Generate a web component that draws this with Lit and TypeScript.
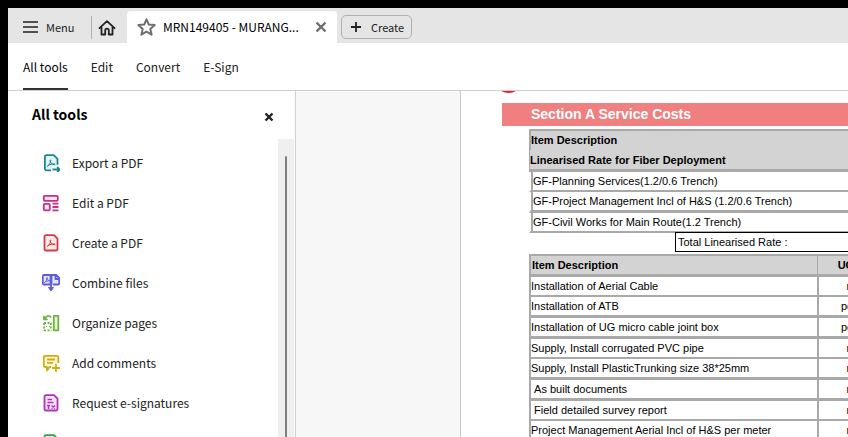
import { LitElement, html, css, svg } from "lit";
import { customElement, property } from "lit/decorators.js";

const acrobat = svg`<path d="M5.500 12.200c1.600-1 3-3.200 3.200-5.600 0-.9-.7-.9-.7 0 .2 2 2.200 4 4.500 4.200 .9 0 .8-.9-.2-.9-2 0-4.600 .7-6.300 1.700-.8.5-.9.9-.5.6z" stroke-width="1"/>`;

const icons: Record<string, unknown> = {
  export: svg`<g stroke="#1c8790"><path fill="#e3f3f4" stroke="none" d="M3 2h9l4 4v6H10v4H3z"/><path d="M9 16.300H4.500a1.600 1.600 0 0 1-1.600-1.600V2.700a1.600 1.600 0 0 1 1.600-1.600h7.300l3.700 3.700v6"/>${acrobat}<path d="M10.500 15.500h7M15.200 13l2.500 2.500-2.500 2.500"/></g>`,
  edit: svg`<g stroke="#cc2d87"><rect x="1.800" y="1.800" width="14" height="5" rx="1" fill="#fbe4f1"/><rect x="1.800" y="9.800" width="6" height="6.500" rx="1" fill="#fbe4f1"/><path d="M10.500 9.700h6M10.500 13h6M10.500 16.300h6"/></g>`,
  create: svg`<g stroke="#d7373f"><path fill="#fdeaea" d="M4 1.200h8l3.500 3.500v10.300a1.500 1.500 0 0 1-1.500 1.500H4A1.500 1.500 0 0 1 2.500 15V2.700A1.500 1.500 0 0 1 4 1.200z"/>${acrobat}</g>`,
  combine: svg`<g stroke="#5c5ce0"><path fill="#e6e6fb" d="M7 10.500H1.800a1 1 0 0 1-1-1v-7.500a1 1 0 0 1 1-1H8.500v9.500zM11 10.500h5.200a1 1 0 0 0 1-1V4l-3-3H9.500v9.500M13.500 1.500V5H17"/><path stroke-width="1" d="M2.500 8.500C4 7.500 5 5.500 5 3.500c.3 2 1.200 3 2.500 3.300-2 0-4 .7-5 1.700"/><path d="M9 7v9"/><path fill="#5c5ce0" stroke-width="1" d="M6.500 13.500h5L9 17z"/></g>`,
  organize: svg`<g stroke="#72b340"><rect x="11.800" y="1.800" width="4.500" height="14.500" fill="#e9f6df"/><path stroke-dasharray="2 1.500" d="M2 9h7.500M2 16.300h7.500M2 9v7.500M8.800 9v7.500"/><path stroke-dasharray="1 2" stroke-width="1" d="M4 12.500h4"/><path d="M9 3.500C7.500 1.300 5 1.300 3.300 4"/><path fill="#72b340" stroke-width="1" d="M1.500 1.800v4h4z"/></g>`,
  comment: svg`<g stroke="#cfae12"><path fill="#fdf7d7" d="M9 13H7.500L5 16.500V13H3.300a1.500 1.500 0 0 1-1.500-1.500V3.300a1.500 1.500 0 0 1 1.500-1.500h11.500a1.500 1.500 0 0 1 1.500 1.500V9"/><path d="M5 5.500h8M5 8.800h6M14 10v8M10 14h8"/></g>`,
  sign: svg`<g stroke="#b130bd"><path fill="#f9e4fa" d="M4 1.200h8l3.500 3.500v10.300a1.500 1.500 0 0 1-1.500 1.500H4A1.500 1.500 0 0 1 2.500 15V2.700A1.500 1.500 0 0 1 4 1.200z"/><path stroke-width="1.500" d="M5.500 5.500h4.500M5.500 8.500h6M6.500 11v4M5 11.500h3M9.500 11.500l3.500 3M13 11.500l-3.500 3"/></g>`,
  scan: svg`<g stroke="#2da350"><path fill="#def3e4" d="M4 1.200h8l3.500 3.500v10.300a1.500 1.500 0 0 1-1.500 1.500H4A1.500 1.500 0 0 1 2.500 15V2.700A1.500 1.500 0 0 1 4 1.200z"/></g>`,
};

@customElement("tool-item")
export class ToolItem extends LitElement {
  @property() icon = "";
  @property() label = "";

  static styles = css`
    :host { display: block; }
    .tool {
      display: flex; align-items: center; gap: 12px; width: 100%; height: 40px;
      padding: 0; border: 0; background: none; color: #222; text-align: left;
      font: 12px/20px "Noto Sans CJK SC", sans-serif;
    }
    .glyph { width: 18px; height: 18px; fill: none; stroke-width: 1.8; stroke-linejoin: round; }
  `;

  render() {
    return html`<button class="tool">
      <svg class="glyph" viewBox="0 0 18 18" aria-hidden="true">${icons[this.icon]}</svg>
      <span>${this.label}</span>
    </button>`;
  }
}

const tools = [
  ["export", "Export a PDF"], ["edit", "Edit a PDF"], ["create", "Create a PDF"],
  ["combine", "Combine files"], ["organize", "Organize pages"], ["comment", "Add comments"],
  ["sign", "Request e-signatures"], ["scan", "Scan & OCR"],
];

const planning = [
  "GF-Planning Services(1.2/0.6 Trench)",
  "GF-Project Management Incl of H&S (1.2/0.6 Trench)",
  "GF-Civil Works for Main Route(1.2 Trench)",
];

const works = [
  ["Installation of Aerial Cable", "m"],
  ["Installation of ATB", "pcs."],
  ["Installation of UG micro cable joint box", "pcs."],
  ["Supply, Install corrugated PVC pipe", "m"],
  ["Supply, Install PlasticTrunking size 38*25mm", "m"],
  ["\u00a0As built documents", "m"],
  ["\u00a0Field detailed survey report", "m"],
  ["Project Management Aerial Incl of H&S per meter", "m"],
];

@customElement("app-root")
export class AppRoot extends LitElement {
  static styles = css`
    :host {
      display: flex; flex-direction: column; box-sizing: border-box; height: 100vh;
      padding: 8px 0 0 8px; background: #000; color: #222; overflow: hidden;
      font: 12px/20px "Noto Sans CJK SC", sans-serif;
    }
    button { padding: 0; border: 0; background: none; color: inherit; font: inherit; }
    .line { fill: none; stroke: currentColor; display: block; }

    .titlebar { display: flex; flex: none; height: 35px; background: #e5e5e5; }
    .menu { display: flex; align-items: center; gap: 8px; width: 83px; padding: 2px 0 0 15px; font-size: 11px; box-sizing: border-box; }
    .bars { color: #505050; }
    .home { display: flex; align-items: center; justify-content: center; width: 31px; height: 23px; margin: 8px 5px 0 0; border-left: 1px solid #b1b1b1; }
    .tab { display: flex; align-items: center; width: 210px; height: 32px; margin-top: 3px; padding: 0 10px; box-sizing: border-box; border-radius: 4px 4px 0 0; background: #fff; color: #000; }
    .title { flex: 1; margin-left: 7px; white-space: nowrap; }
    .star, .close { color: #6e6e6e; }
    .create { display: flex; align-items: center; gap: 9px; height: 24px; width: 71px; margin: 7px 0 0 4px; padding-left: 8px; box-sizing: border-box; border: 1px solid #b1b1b1; border-radius: 5px; font-size: 11px; }

    .nav { display: flex; flex: none; gap: 23px; height: 47px; padding-left: 15px; background: #fff; border-bottom: 1px solid #d0d0d0; }
    .link { box-sizing: border-box; padding-top: 14px; color: #222; text-decoration: none; }
    .link.current { color: #000; border-bottom: 2px solid #333; }

    .body { display: flex; flex: 1; min-height: 0; background: #f7f7f7; }
    .panel { display: flex; flex: none; flex-direction: column; width: 287px; background: #fff; border-right: 1px solid #d0d0d0; }
    .head { display: flex; flex: none; justify-content: space-between; height: 48px; padding: 0 21px 0 24px; box-sizing: border-box; }
    .heading { margin: 13px 0 0; font: bold 14px/20px "Noto Sans CJK SC", sans-serif; color: #000; }
    .head button { margin-top: 4px; color: #222; }
    .scroller { display: flex; flex: 1; min-height: 0; margin-right: 1px; }
    .list { flex: 1; margin: 0; padding: 4px 0 0 34px; list-style: none; }
    .track { width: 16px; padding: 17px 6px 0 7px; box-sizing: border-box; background: #efefef; }
    .thumb { height: 100%; width: 2px; background: #808080; border-radius: 1px 1px 0 0; }

    .sheet {
      flex: 1; min-width: 0; margin-left: 164px; overflow: hidden; background: #fff;
      border-left: 1px solid #c8c8c8; color: #000; font: 11px/18px "Liberation Sans", Arial, sans-serif;
    }
    .mark { display: block; margin-left: 39px; }
    .banner { margin: 0 0 3px 41px; padding-left: 29px; background: #f08080; color: #fff; font: bold 14px/23px "Liberation Sans", Arial, sans-serif; }
    table { margin-left: 68px; border-collapse: separate; border-spacing: 0; table-layout: fixed; white-space: nowrap; }
    th, td { padding: 0; text-align: left; }
    th { background: #d3d3d3; }
    .rates { width: calc(100% - 68px); }
    .rates .top { padding-bottom: 1px; border-top: 2px solid #a9a9a9; border-left: 2px solid #a9a9a9; }
    .rates .sub { height: 19px; padding: 0; border-left: 1px solid #a9a9a9; border-bottom: 3px solid #a9a9a9; }
    .rates td { padding-left: 2px; border-left: 2px solid #fff; border-bottom: 3px solid #a9a9a9; box-shadow: inset 2px 0 #a9a9a9; }
    .rates tbody tr:first-child td, .rates tr:last-child td { border-bottom-width: 2px; }
    .total { position: relative; margin: -1px 0 2px 214px; padding-left: 2px; background: #fff; border: 1px solid #000; border-right: 0; }
    .works { width: 354px; }
    .works .name { width: 288px; }
    .works th { border-top: 2px solid #a9a9a9; border-bottom: 3px solid #a9a9a9; }
    .works th.name { padding-left: 1px; border-left: 2px solid #a9a9a9; box-sizing: border-box; }
    .works .unit { padding: 0; text-align: center; border-left: 1px solid #a9a9a9; }
    .works td { border-left: 2px solid #a9a9a9; border-bottom: 3px solid #a9a9a9; }
    .works td.unit { border-left-width: 2px; }
    .works tr:nth-child(3n + 1) td { border-bottom-width: 2px; }
  `;

  render() {
    return html`
      <header class="titlebar">
        <button class="menu">
          <svg class="line bars" width="15" height="14" stroke-width="2"><path d="M0 2h15M0 7h15M0 12h15" /></svg>Menu
        </button>
        <button class="home" aria-label="Home">
          <svg class="line" width="18" height="16" stroke-width="1.800" stroke-linejoin="round" stroke-linecap="round"><path d="M1.500 8.200 9 1.200l7.500 7M3.500 7v7.500h3.700v-4a1.800 1.800 0 0 1 3.600 0v4h3.700V7" /></svg>
        </button>
        <div class="tab">
          <svg class="line star" width="19" height="18" stroke-width="2" stroke-linejoin="round"><path d="m9.500 1.300 2.300 5.300 5.900.5-4.400 3.900 1.300 5.700-5.100-3-5.100 3 1.300-5.700L1.300 7.100l5.900-.5z" /></svg>
          <span class="title">MRN149405 - MURANG...</span>
          <button class="close" aria-label="Close tab"><svg class="line" width="12" height="12" stroke-width="2.400"><path d="m1.500 1.500 9 9m0-9-9 9" /></svg></button>
        </div>
        <button class="create"><svg class="line" width="12" height="12" stroke-width="1.800"><path d="M6 1v10M1 6h10" /></svg>Create</button>
      </header>
      <nav class="nav">
        <a class="link current" href="#tools">All tools</a>
        <a class="link" href="#edit">Edit</a>
        <a class="link" href="#convert">Convert</a>
        <a class="link" href="#sign">E-Sign</a>
      </nav>
      <div class="body">
        <aside class="panel">
          <div class="head">
            <h2 class="heading">All tools</h2>
            <button aria-label="Close panel"><svg class="line" width="10" height="10" stroke-width="2.400"><path d="m1.500 1.500 7 7m0-7-7 7" /></svg></button>
          </div>
          <div class="scroller">
            <ul class="list">
              ${tools.map(([icon, label]) => html`<li><tool-item icon=${icon} label=${label}></tool-item></li>`)}
            </ul>
            <div class="track"><div class="thumb"></div></div>
          </div>
        </aside>
        <main class="sheet">
          <svg class="mark" width="18" height="12" aria-hidden="true"><path fill="#e0202c" d="M1 0h15Q9 4 1 0z" /></svg>
          <h3 class="banner">Section A Service Costs</h3>
          <table class="rates">
            <thead>
              <tr><th class="top">Item Description</th></tr>
              <tr><th class="sub">Linearised Rate for Fiber Deployment</th></tr>
            </thead>
            <tbody>${planning.map((name) => html`<tr><td>${name}</td></tr>`)}</tbody>
          </table>
          <div class="total">Total Linearised Rate :</div>
          <table class="works">
            <thead><tr><th class="name">Item Description</th><th class="unit">UOM</th></tr></thead>
            <tbody>${works.map(([name, unit]) => html`<tr><td>${name}</td><td class="unit">${unit}</td></tr>`)}</tbody>
          </table>
        </main>
      </div>
    `;
  }
}
